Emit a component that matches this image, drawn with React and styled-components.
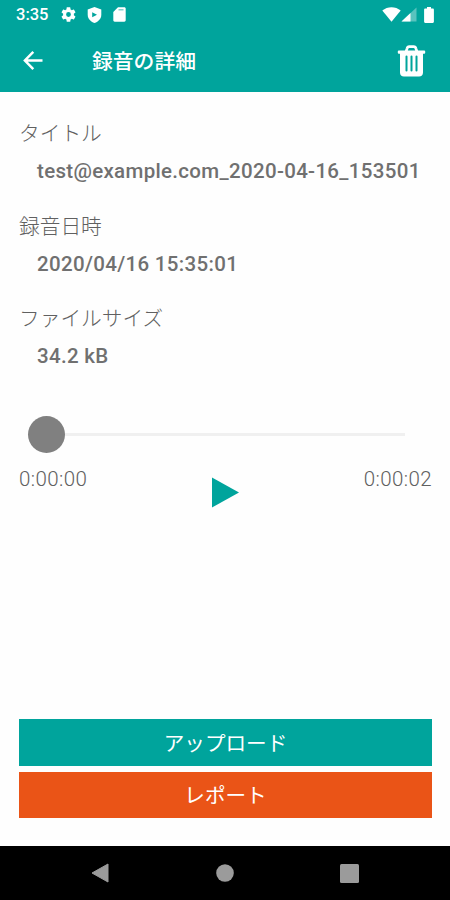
import styled, { createGlobalStyle } from "styled-components";

const details = [
  { label: "タイトル", value: "test@example.com_2020-04-16_153501" },
  { label: "録音日時", value: "2020/04/16 15:35:01" },
  { label: "ファイルサイズ", value: "34.2 kB" },
];

const App = () => {
  return (
    <Screen>
      <GlobalStyle />
      <StatusBar>
        <Clock>3:35</Clock>
        <StatusIcons>
          <SettingsIcon />
          <ShieldIcon />
          <SdCardIcon />
        </StatusIcons>
        <SystemIcons>
          <WifiIcon />
          <SignalIcon />
          <BatteryIcon />
        </SystemIcons>
      </StatusBar>
      <AppBar>
        <IconButton aria-label="戻る">
          <BackIcon />
        </IconButton>
        <AppBarTitle>録音の詳細</AppBarTitle>
        <IconButton aria-label="削除">
          <TrashIcon />
        </IconButton>
      </AppBar>
      <Content>
        <DetailList>
          {details.map(({ label, value }) => (
            <Detail key={label}>
              <DetailLabel>{label}</DetailLabel>
              <DetailValue>{value}</DetailValue>
            </Detail>
          ))}
        </DetailList>
        <Slider>
          <SliderThumb />
          <SliderTrack />
        </Slider>
        <PlayerRow>
          <Time>0:00:00</Time>
          <PlayButton aria-label="再生">
            <PlayIcon />
          </PlayButton>
          <Time $end>0:00:02</Time>
        </PlayerRow>
        <Actions>
          <ActionButton $color="#00a49c">アップロード</ActionButton>
          <ActionButton $color="#ea5417">レポート</ActionButton>
        </Actions>
      </Content>
      <NavBar>
        <svg width="18" height="20" viewBox="0 0 18 20">
          <path d="M17 1v18L1 10z" fill="#9b9b9b" stroke="#9b9b9b" strokeLinejoin="round" />
        </svg>
        <svg width="18" height="18" viewBox="0 0 18 18">
          <circle cx="9" cy="9" r="8.8" fill="#9b9b9b" />
        </svg>
        <svg width="19" height="19" viewBox="0 0 19 19">
          <rect width="19" height="19" rx="1.5" fill="#9b9b9b" />
        </svg>
      </NavBar>
    </Screen>
  );
};

export default App;

const SettingsIcon = () => (
  <svg width="15" height="15" viewBox="2 2 20 20" fill="#fff">
    <path d="M19.14 12.94c.04-.3.06-.61.06-.94 0-.32-.02-.64-.07-.94l2.03-1.58a.49.49 0 0 0 .12-.61l-1.92-3.32a.488.488 0 0 0-.59-.22l-2.39.96c-.5-.38-1.03-.7-1.62-.94l-.36-2.54a.484.484 0 0 0-.48-.41h-3.84c-.24 0-.43.17-.47.41l-.36 2.54c-.59.24-1.13.57-1.62.94l-2.39-.96c-.22-.08-.47 0-.59.22L2.74 8.87c-.12.21-.08.47.12.61l2.03 1.58c-.05.3-.09.63-.09.94s.02.64.07.94l-2.03 1.58a.49.49 0 0 0-.12.61l1.92 3.32c.12.22.37.29.59.22l2.39-.96c.5.38 1.03.7 1.62.94l.36 2.54c.05.24.24.41.48.41h3.84c.24 0 .44-.17.47-.41l.36-2.54c.59-.24 1.13-.56 1.62-.94l2.39.96c.22.08.47 0 .59-.22l1.92-3.32c.12-.22.07-.47-.12-.61l-2.01-1.58zM12 15.2a3.2 3.2 0 1 1 0-6.4 3.2 3.2 0 0 1 0 6.4z" />
  </svg>
);

const ShieldIcon = () => (
  <svg width="15" height="16" viewBox="0 0 15 16">
    <path d="M7.5 0 14.3 2.5v5.2c0 4-2.8 6.8-6.8 8.3-4-1.5-6.8-4.3-6.8-8.3V2.5z" fill="#fff" />
    <path d="M5.2 5.2v5L10 7.7z" fill="#00a49c" />
  </svg>
);

const SdCardIcon = () => (
  <svg width="13" height="15" viewBox="0 0 13 15">
    <path d="M5 .2h6.3c.8 0 1.4.6 1.4 1.4v11.7c0 .8-.6 1.4-1.4 1.4H1.7c-.8 0-1.4-.6-1.4-1.4V5z" fill="#fff" />
    <path d="M5.5 2.8h5" stroke="#00a49c" strokeWidth="1.2" opacity="0.6" />
  </svg>
);

const WifiIcon = () => (
  <svg width="19" height="15" viewBox="0 0 19 15">
    <path d="M.3 3.6C5.5-.9 13.5-.9 18.7 3.6L9.5 14.8z" fill="#fff" />
  </svg>
);

const SignalIcon = () => (
  <svg width="16" height="15" viewBox="0 0 16 15">
    <path d="M.5 14.5 15.5.5v14z" fill="#fff" opacity="0.35" />
    <path d="M.5 14.5 9.5 6v8.5z" fill="#fff" />
  </svg>
);

const BatteryIcon = () => (
  <svg width="10" height="16" viewBox="0 0 10 16">
    <path d="M3 0h4v1.5h1.7c.7 0 1.2.5 1.2 1.2v12c0 .7-.5 1.2-1.2 1.2H1.3c-.7 0-1.2-.5-1.2-1.2v-12c0-.7.5-1.2 1.2-1.2H3z" fill="#fff" />
  </svg>
);

const BackIcon = () => (
  <svg width="20" height="20" viewBox="0 0 20 20" fill="none" stroke="#fff" strokeWidth="2.5">
    <path d="M19.5 9.5h-17M10.3.9 1.9 9.5l8.4 8.6" />
  </svg>
);

const TrashIcon = () => (
  <svg width="29" height="32" viewBox="0 0 29 32">
    <path d="M9 7l1-3.4c.3-1.2 1.1-1.9 2.3-1.9h4.4c1.2 0 2 .7 2.3 1.9l1 3.4" fill="none" stroke="#fff" strokeWidth="2.7" />
    <path d="M1.8 5.6h25.4a1 1 0 0 1 1 1v1.2a1 1 0 0 1-1 1H26v18.6c0 2.500-1.500 4-4 4H7c-2.500 0-4-1.500-4-4V8.800H1.800a1 1 0 0 1-1-1V6.600a1 1 0 0 1 1-1z" fill="#fff" />
    <path d="M9.5 11.5v14M14.5 11.5v14M19.5 11.5v14" stroke="#00a49c" strokeWidth="2" strokeLinecap="round" />
  </svg>
);

const PlayIcon = () => (
  <svg width="28" height="31" viewBox="0 0 28 31">
    <path d="M0 .5v30l27-15z" fill="#00a49c" />
  </svg>
);

const GlobalStyle = createGlobalStyle`
  body {
    margin: 0;
    background: #fff;
    font-family: Roboto, "Noto Sans CJK JP", sans-serif;
  }
`;

const Screen = styled.div`
  display: flex;
  flex-direction: column;
  width: 450px;
  height: 900px;
  background: #fefefe;
  overflow: hidden;
`;

const StatusBar = styled.div`
  display: flex;
  align-items: center;
  height: 29px;
  box-sizing: border-box;
  padding: 0 16px;
  background: #00a49c;
`;

const Clock = styled.span`
  width: 45px;
  font-size: 16.5px;
  font-weight: 500;
  line-height: 31px;
  color: #fff;
`;

const StatusIcons = styled.div`
  display: flex;
  align-items: center;
  gap: 11px;
`;

const SystemIcons = styled.div`
  display: flex;
  align-items: center;
  margin-left: auto;

  svg:last-child {
    margin-left: 7px;
  }
`;

const AppBar = styled.header`
  display: flex;
  align-items: center;
  height: 63px;
  box-sizing: border-box;
  padding: 0 24px 0 23px;
  background: #00a49c;
`;

const IconButton = styled.button`
  display: flex;
  padding: 0;
  border: none;
  background: none;
`;

const AppBarTitle = styled.h1`
  flex: 1;
  margin: 2px 0 0 49px;
  font-size: 20.8px;
  font-weight: 500;
  line-height: 30px;
  color: #fff;
`;

const Content = styled.main`
  display: flex;
  flex: 1;
  flex-direction: column;
  padding: 24px 18px 28px 19px;
`;

const DetailList = styled.dl`
  margin: 0;
`;

const Detail = styled.div`
  height: 92.7px;
`;

const DetailLabel = styled.dt`
  font-size: 20.7px;
  font-weight: 300;
  line-height: 37px;
  color: #606060;
`;

const DetailValue = styled.dd`
  margin: 0 0 0 18px;
  font-size: 20.5px;
  font-weight: 500;
  line-height: 37px;
  letter-spacing: 0.32px;
  white-space: nowrap;
  color: #707070;
`;

const Slider = styled.div`
  display: flex;
  align-items: center;
  height: 37px;
  margin: 22px 27px 0 9px;
`;

const SliderThumb = styled.div`
  width: 37px;
  height: 37px;
  border-radius: 50%;
  background: #808080;
`;

const SliderTrack = styled.div`
  flex: 1;
  height: 3px;
  background: #f0f0f0;
`;

const PlayerRow = styled.div`
  display: flex;
  align-items: flex-start;
  margin-top: 11px;
`;

const Time = styled.span`
  flex: 1;
  margin-top: 2px;
  font-size: 20.5px;
  font-weight: 300;
  line-height: 26px;
  letter-spacing: 0.4px;
  text-align: ${({ $end }) => ($end ? "right" : "left")};
  color: #606060;
`;

const PlayButton = styled(IconButton)`
  margin-top: 13px;
`;

const Actions = styled.div`
  display: flex;
  flex-direction: column;
  gap: 6px;
  margin-top: auto;
`;

const ActionButton = styled.button`
  height: 46.5px;
  padding: 0 0 1px;
  border: none;
  background: ${({ $color }) => $color};
  font-family: inherit;
  font-size: 20.6px;
  font-weight: 400;
  color: #fff;
`;

const NavBar = styled.nav`
  display: flex;
  align-items: center;
  justify-content: space-between;
  height: 54px;
  box-sizing: border-box;
  padding: 0 91px;
  background: #000;
`;
